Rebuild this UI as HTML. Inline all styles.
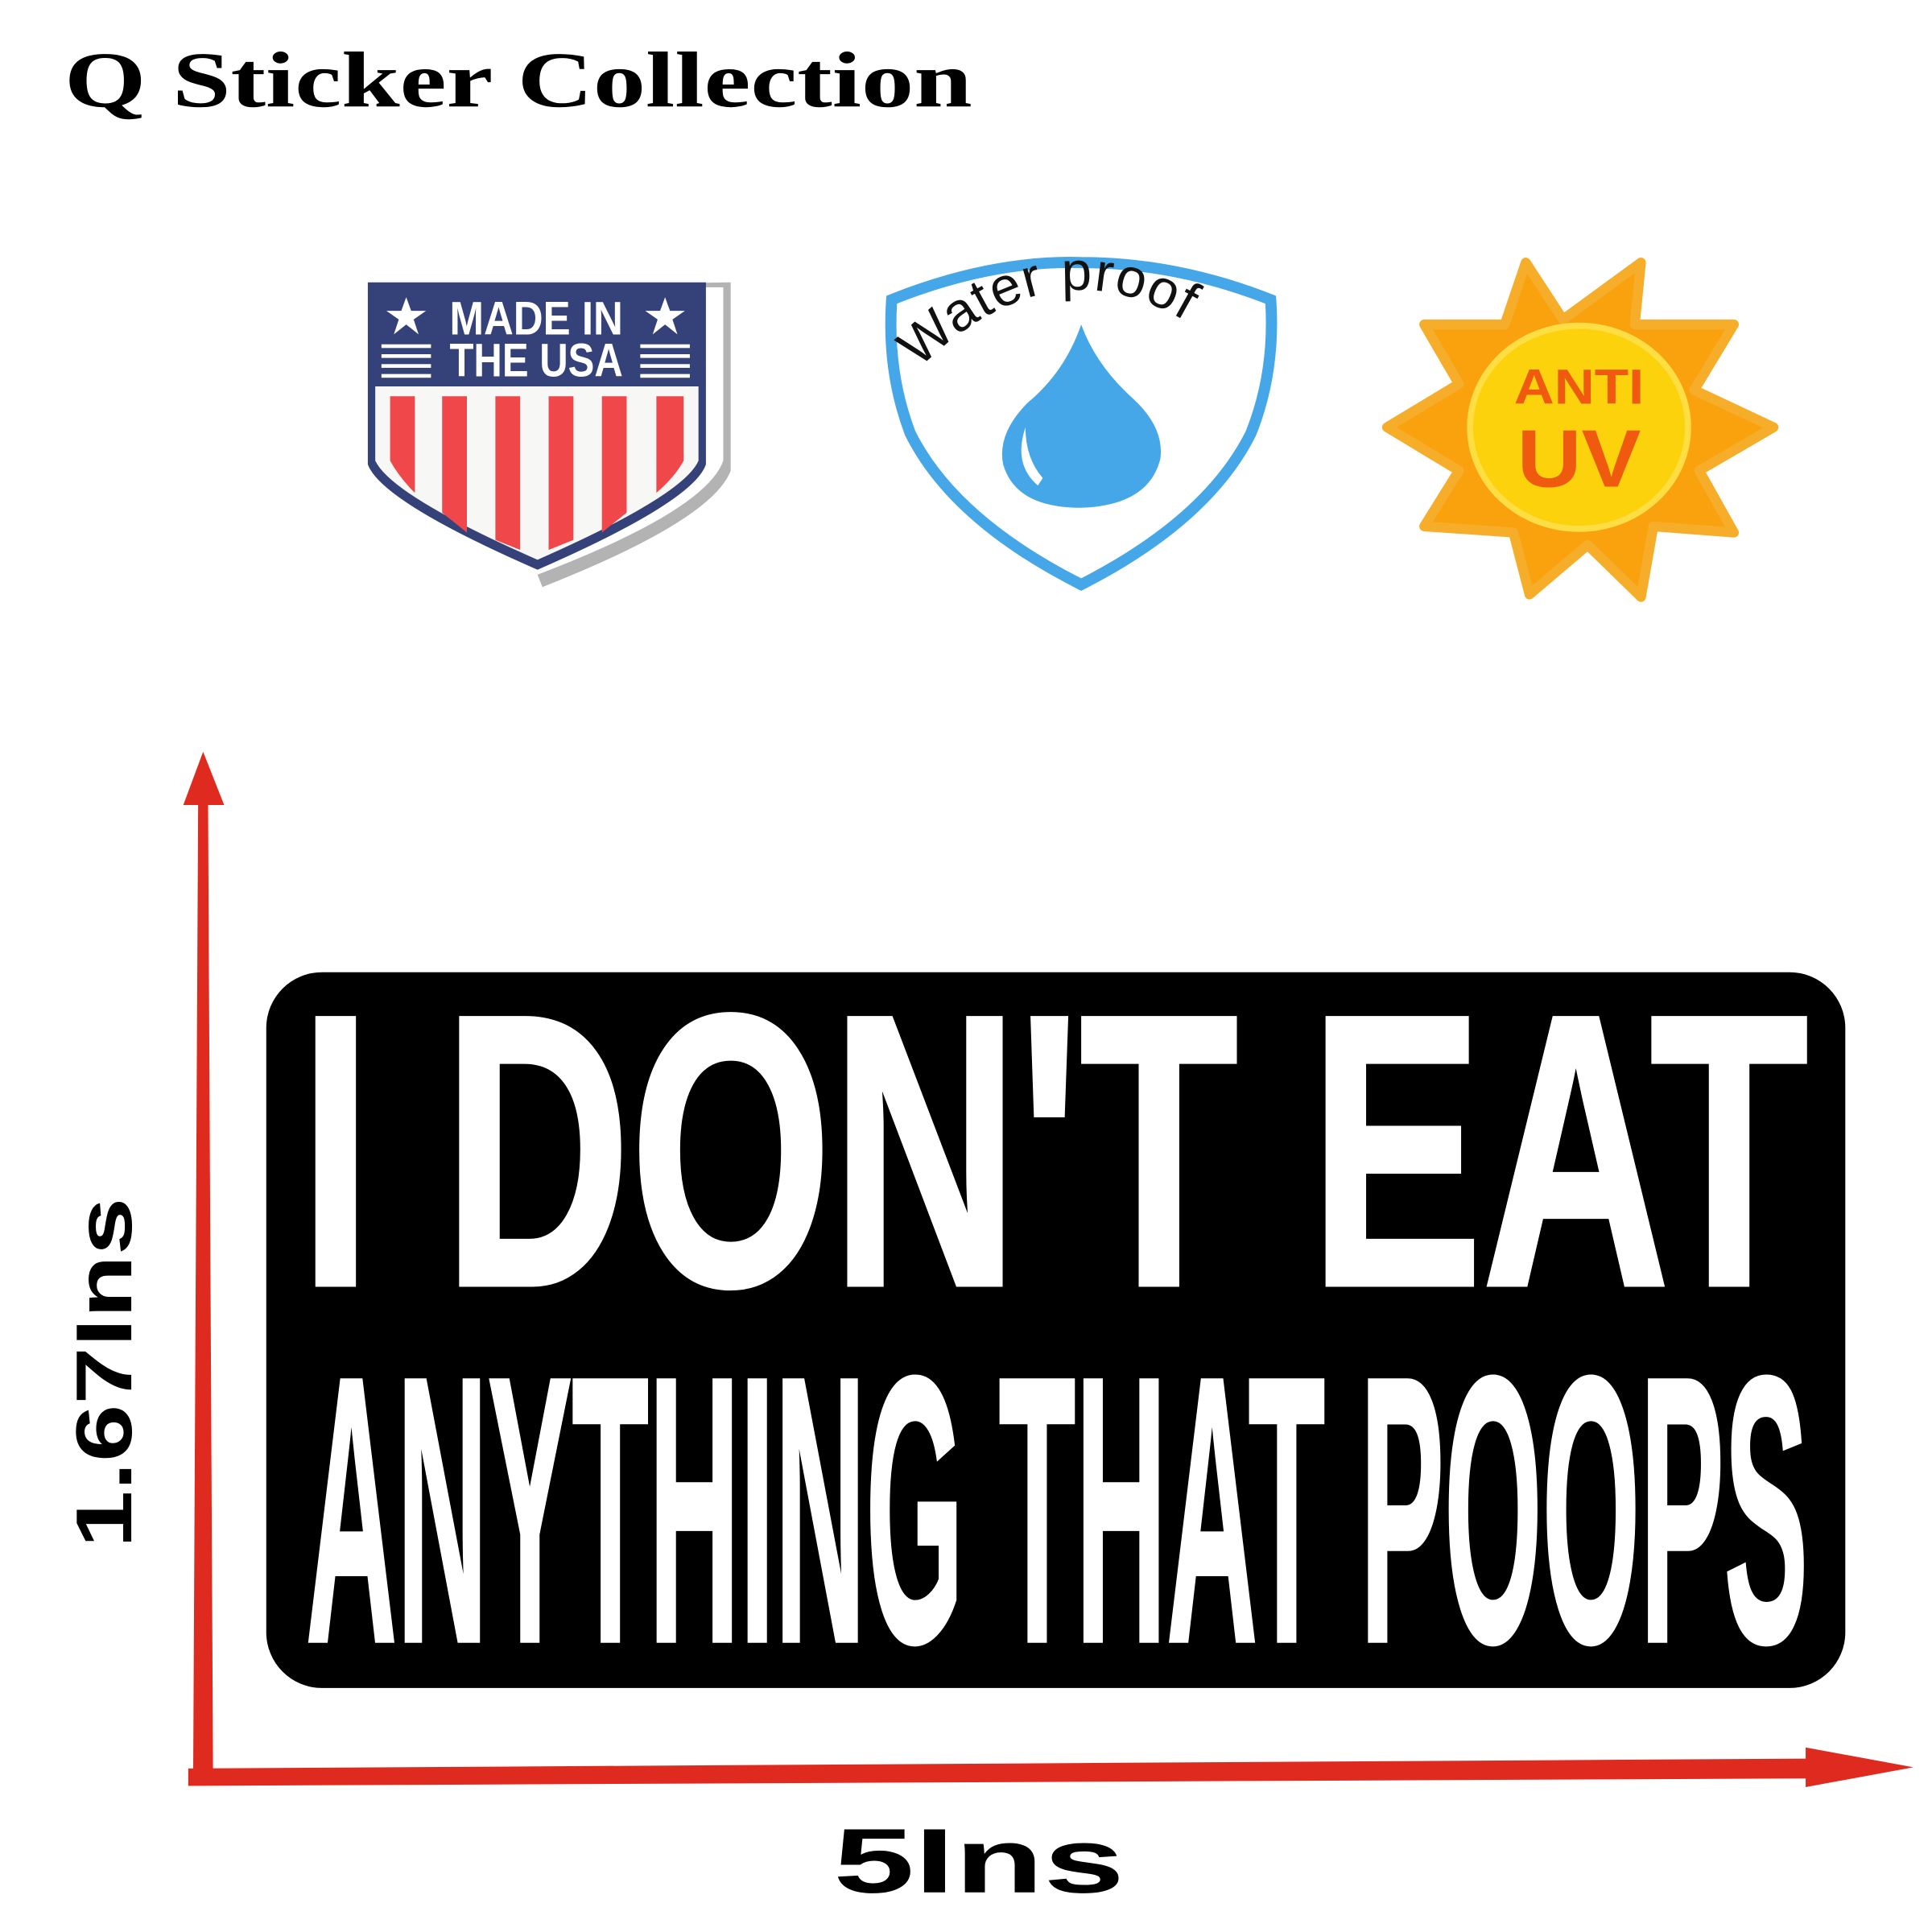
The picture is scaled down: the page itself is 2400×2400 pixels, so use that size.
<!DOCTYPE html>
<html><head><meta charset="utf-8"><style>
html,body{margin:0;padding:0;background:#fff;width:2400px;height:2400px;overflow:hidden}
svg{display:block}
</style></head><body>
<svg width="2400" height="2400" viewBox="0 0 1560 1560" xmlns="http://www.w3.org/2000/svg">
<rect width="1560" height="1560" fill="#fff"/>
<text x="52" y="86" font-family="Liberation Serif" font-weight="bold" font-size="64" textLength="733" lengthAdjust="spacingAndGlyphs">Q Sticker Collection</text>

<!-- USA shield -->
<path d="M302 232 L590 228 L590 380 Q575 420 438 474 L434 464 Q570 412 584 372 L584 232 Z" fill="#b3b3b3"/>
<path d="M297 228 H570 V375 Q560 405 434 460 Q308 405 297 375 Z" fill="#344279"/>
<path d="M303 312 H564 V372 Q552 400 434 452 Q316 400 303 372 Z" fill="#f7f7f5"/>
<g fill="#f0474a">
<path d="M315 320 H335 V398 Q322 385 315 372 Z"/>
<path d="M357 320 H377 V430 L357 414 Z"/>
<path d="M400 320 H420 V444 L400 436 Z"/>
<path d="M443 320 H463 V436 L443 444 Z"/>
<path d="M486 320 H506 V414 L486 430 Z"/>
<path d="M530 320 H552 V372 Q545 385 530 398 Z"/>
</g>
<g fill="#fff">
<polygon points="328,240 332,251 344,251 334,258 338,270 328,262 318,270 322,258 312,251 324,251"/>
<polygon points="537,240 541,251 553,251 543,258 547,270 537,262 527,270 531,258 521,251 533,251"/>
<rect x="308" y="278" width="40" height="3"/><rect x="308" y="286" width="40" height="3"/><rect x="308" y="294" width="40" height="3"/><rect x="308" y="302" width="40" height="3"/>
<rect x="517" y="278" width="40" height="3"/><rect x="517" y="286" width="40" height="3"/><rect x="517" y="294" width="40" height="3"/><rect x="517" y="302" width="40" height="3"/>
</g>
<text x="433" y="270" text-anchor="middle" font-family="Liberation Sans" font-weight="bold" font-size="38" fill="#fff" textLength="140" lengthAdjust="spacingAndGlyphs">MADE IN</text>
<text x="433" y="304" text-anchor="middle" font-family="Liberation Sans" font-weight="bold" font-size="38" fill="#fff" textLength="140" lengthAdjust="spacingAndGlyphs">THE USA</text>

<!-- Water proof -->
<path d="M720 242 Q800 210 873 212 Q950 212 1026 242 Q1030 300 1010 350 Q975 420 873 472 Q770 420 735 350 Q716 300 720 242 Z" fill="#fff" stroke="#45a6e8" stroke-width="9"/>
<path id="arc" d="M742 298 Q870 170 1008 298" fill="none"/>
<text font-family="Liberation Sans" font-size="44" fill="#111" letter-spacing="1"><textPath href="#arc" startOffset="0">Water proof</textPath></text>
<path d="M873 262 Q860 300 830 325 Q805 350 810 375 Q820 410 873 410 Q928 408 937 370 Q940 345 915 322 Q885 295 873 262 Z" fill="#45a6e8"/>
<path d="M828 345 Q818 375 838 392 L842 386 Q828 370 828 345Z" fill="#fff"/>

<!-- Sun -->
<polygon points="1232,212 1262,258 1325,212 1320,262 1400,262 1368,315 1432,345 1372,380 1400,430 1335,425 1325,482 1282,440 1235,480 1222,430 1150,425 1178,380 1120,345 1178,310 1150,262 1215,262" fill="#f9a20e" stroke="#f6ad2a" stroke-width="8" stroke-linejoin="round"/>
<ellipse cx="1275" cy="345" rx="88" ry="82" fill="#fbd20c" stroke="#ffde44" stroke-width="5"/>
<text x="1275" y="326" text-anchor="middle" font-family="Liberation Sans" font-weight="bold" font-size="40" fill="#ef5a0f" textLength="105" lengthAdjust="spacingAndGlyphs">ANTI</text>
<text x="1275" y="393" text-anchor="middle" font-family="Liberation Sans" font-weight="bold" font-size="66" fill="#ef5a0f" textLength="100" lengthAdjust="spacingAndGlyphs">UV</text>

<!-- arrows -->
<polygon points="160,648 168,648 172,1430 156,1430" fill="#df2a1f"/>
<polygon points="164,607 148,650 181,650" fill="#df2a1f"/>
<polygon points="152,1428 1460,1420 1460,1436 152,1442" fill="#df2a1f"/>
<polygon points="1545,1427 1458,1411 1458,1443" fill="#df2a1f"/>
<text transform="translate(106,1250) rotate(-90)" font-family="Liberation Sans" font-weight="bold" font-size="64" textLength="283" lengthAdjust="spacingAndGlyphs">1.67Ins</text>
<text x="673" y="1528" font-family="Liberation Sans" font-weight="bold" font-size="74" textLength="235" lengthAdjust="spacingAndGlyphs">5Ins</text>

<!-- sticker -->
<rect x="215" y="785" width="1275" height="578" rx="45" fill="#000"/>
<text x="242" y="1037" font-family="Liberation Sans" font-weight="bold" font-size="312" fill="#fff" stroke="#fff" stroke-width="4" textLength="1218" lengthAdjust="spacingAndGlyphs">I DON'T EAT</text>
<text x="247" y="1325" font-family="Liberation Sans" font-weight="bold" font-size="306" fill="#fff" stroke="#fff" stroke-width="3" textLength="1213" lengthAdjust="spacingAndGlyphs">ANYTHING THAT POOPS</text>
</svg>
</body></html>
